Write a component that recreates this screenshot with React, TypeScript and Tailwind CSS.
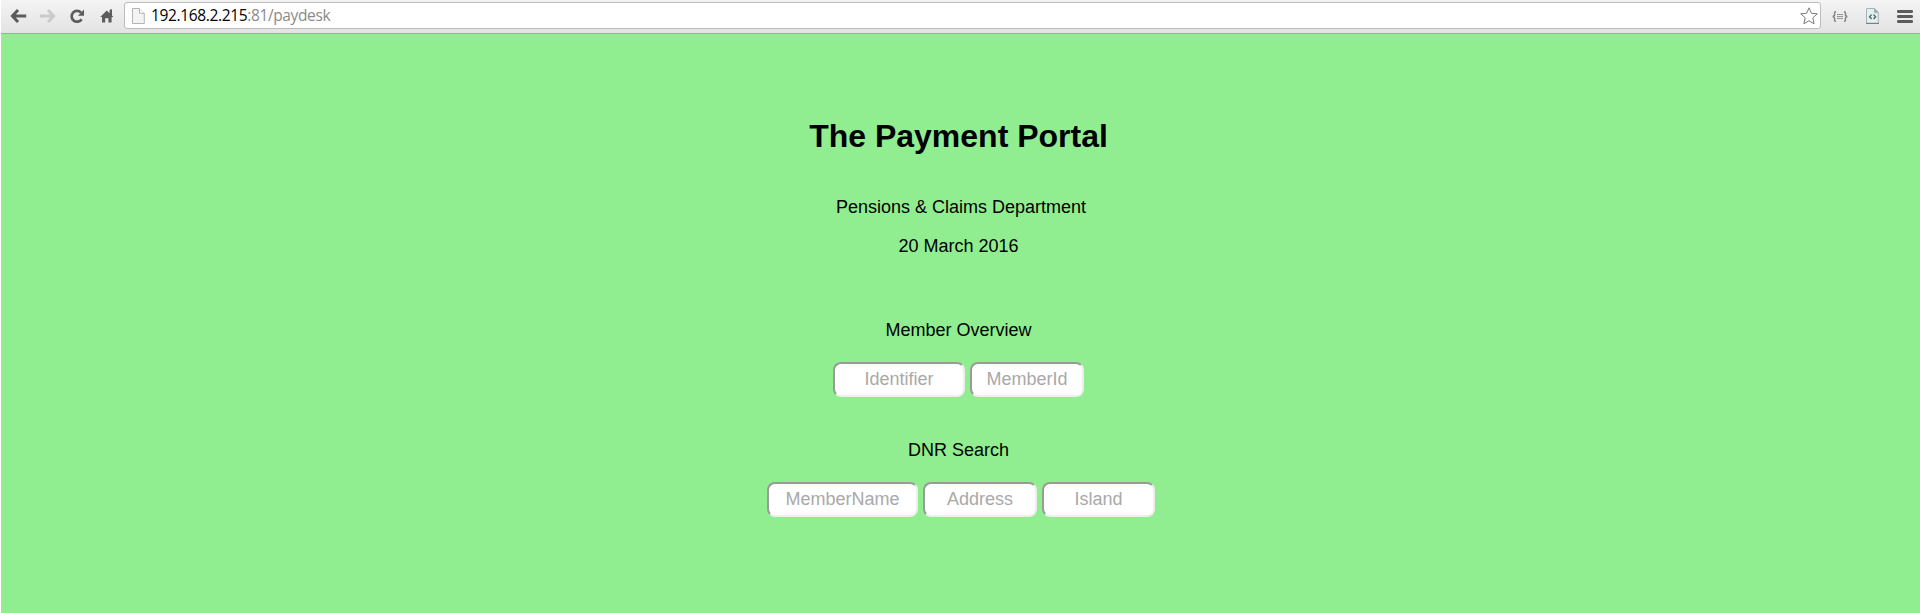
import type { ReactNode } from "react";

function BackIcon() {
  return (
    <svg width="17" height="14" viewBox="0 0 17 14" fill="none" stroke="#5c5c5c" strokeWidth="3">
      <path d="M8 1 L2.4 7 L8 13 M2.6 7 H16.2" />
    </svg>
  );
}

function ForwardIcon() {
  return (
    <svg width="17" height="14" viewBox="0 0 17 14" fill="none" stroke="#cbcbcb" strokeWidth="3">
      <path d="M9 1 L14.6 7 L9 13 M14.4 7 H0.8" />
    </svg>
  );
}

function ReloadIcon() {
  return (
    <svg width="15" height="15" viewBox="0 0 15 15">
      <path d="M11.6 10.2 A5.4 5.4 0 1 1 11 3.6" fill="none" stroke="#5c5c5c" strokeWidth="2.7" />
      <path d="M14 0.6 V6.7 H7.9 Z" fill="#5c5c5c" />
    </svg>
  );
}

function HomeIcon() {
  return (
    <svg width="14" height="14" viewBox="0 0 14 14" fill="#5c5c5c">
      <path d="M6.7 1.4 L9.6 4.2 V0.8 L12 0.2 V6.5 L13.4 8 H11.6 V13.6 H8.4 V9.2 H5.2 V13.6 H2 V8 H0.2 Z" />
    </svg>
  );
}

function PageIcon() {
  return (
    <svg width="13" height="16" viewBox="0 0 13 16" fill="#f3f3f3" stroke="#b4b4b4">
      <path d="M0.5 0.5 H7.5 L12.3 5.3 V15.5 H0.5 Z" />
      <path d="M7.5 0.5 V5.3 H12.3" fill="#fff" />
    </svg>
  );
}

function StarIcon() {
  return (
    <svg width="18" height="18" viewBox="0 0 18 18" fill="#fff" stroke="#7b7b7b" strokeLinejoin="round">
      <path d="M9 0.8 L11.4 6.3 L17.3 6.8 L12.8 10.8 L14.1 16.8 L9 13.7 L3.9 16.8 L5.2 10.8 L0.7 6.8 L6.6 6.3 Z" />
    </svg>
  );
}

function BracesIcon() {
  return (
    <svg width="16" height="11" viewBox="0 0 16 11" fill="none" stroke="#858585" strokeWidth="1.5">
      <path d="M4 0.8 C2.2 0.8 2.6 2 2.6 3.4 Q2.6 5.2 0.6 5.4 Q2.6 5.6 2.6 7.4 C2.6 9 2.2 10.2 4 10.2" />
      <path d="M12 0.8 C13.8 0.8 13.4 2 13.4 3.4 Q13.4 5.2 15.4 5.4 Q13.4 5.6 13.4 7.4 C13.4 9 13.8 10.2 12 10.2" />
      <path d="M5 3.5 H11 M5 5.5 H11 M5 7.5 H11" strokeWidth="1.2" strokeDasharray="1.7 0.4" />
    </svg>
  );
}

function CodePageIcon() {
  return (
    <svg width="13" height="16" viewBox="0 0 13 16" fill="none">
      <path d="M0.5 0.5 H8.5 L12.3 4.3 V15.3 H0.5 Z" fill="#e3f0f0" stroke="#a4b3b5" />
      <path d="M8.5 0.5 V4.3 H12.3" fill="#9cafb2" stroke="#9cafb2" />
      <path d="M0 15.4 H13" stroke="#707b7d" />
      <path d="M5.6 6.6 L3.6 8.8 L5.6 11 M7.6 6.6 L9.6 8.8 L7.6 11" stroke="#5b6264" strokeWidth="1.4" />
    </svg>
  );
}

function MenuIcon() {
  return (
    <svg width="16" height="13" viewBox="0 0 16 13" fill="#5c5c5c">
      <rect width="16" height="3" rx="1.3" />
      <rect y="5" width="16" height="3" rx="1.3" />
      <rect y="10" width="16" height="3" rx="1.3" />
    </svg>
  );
}

function Toolbar() {
  return (
    <header className="flex h-[34px] items-start border-b border-[#aca6ac] bg-linear-to-b from-[#f4f4f4] to-[#e3e3e3] pl-[9px] pr-[7px] text-[#5c5c5c]">
      <div className="flex h-8 w-[114px] shrink-0 items-center">
        <BackIcon />
        <span className="ml-[12px]"><ForwardIcon /></span>
        <span className="ml-[14px]"><ReloadIcon /></span>
        <span className="ml-[15px]"><HomeIcon /></span>
      </div>
      <div className="mt-[2px] flex h-[27px] grow items-center rounded-[3px] border border-[#bcbcbc] bg-white pl-[7px] pr-[2px]">
        <PageIcon />
        <span className="ml-[6px] grow font-['Open_Sans','Noto_Sans',sans-serif] text-[15.5px] leading-none tracking-[-0.36px] text-[#8a8a8a]">
          <span className="text-black">192.168.2.215</span>:81/paydesk
        </span>
        <StarIcon />
      </div>
      <div className="flex h-8 shrink-0 items-center pl-[11px]">
        <BracesIcon />
        <span className="ml-[18px]"><CodePageIcon /></span>
        <span className="ml-[18px]"><MenuIcon /></span>
      </div>
    </header>
  );
}

function Field({ label, width }: { label: string; width: string }) {
  return (
    <input
      placeholder={label}
      aria-label={label}
      className={`${width} h-[35px] rounded-[8px] border-2 border-t-[#9a9a9a] border-l-[#9a9a9a] border-r-[#eeeeee] border-b-[#eeeeee] bg-white text-center text-[18px] placeholder:text-[#a9a9a9]`}
    />
  );
}

function Section({ title, className, children }: { title: string; className: string; children: ReactNode }) {
  return (
    <section className={`flex flex-col items-center ${className}`}>
      <h2 className="leading-5">{title}</h2>
      <div className="mt-[22px] flex gap-[5px]">{children}</div>
    </section>
  );
}

export default function App() {
  return (
    <div className="flex h-[613px] flex-col bg-white pl-px font-['Liberation_Sans',Arial,sans-serif] text-[18px] text-black">
      <Toolbar />
      <main className="flex grow flex-col items-center bg-[#90ee90] pr-[4px]">
        <h1 className="mt-[84px] text-[32px] font-bold leading-9">The Payment Portal</h1>
        <p className="mt-[43px] pl-[5px] leading-5">Pensions &amp; Claims Department</p>
        <p className="mt-[19px] leading-5">20 March 2016</p>
        <Section title="Member Overview" className="mt-[64px]">
          <Field label="Identifier" width="w-[132px]" />
          <Field label="MemberId" width="w-[114px]" />
        </Section>
        <Section title="DNR Search" className="mt-[43px]">
          <div className="flex gap-[5px] pl-[5px]">
            <Field label="MemberName" width="w-[151px]" />
            <Field label="Address" width="w-[114px]" />
            <Field label="Island" width="w-[113px]" />
          </div>
        </Section>
      </main>
    </div>
  );
}
